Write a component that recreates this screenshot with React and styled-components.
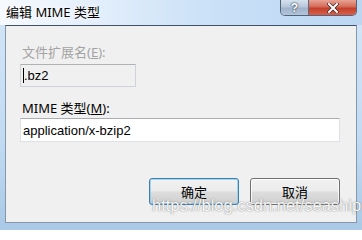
import React from 'react';
import styled, { createGlobalStyle } from 'styled-components';

const GlobalStyle = createGlobalStyle`
  html, body {
    margin: 0;
    padding: 0;
    width: 362px;
    height: 230px;
    overflow: hidden;
  }
  *, *::before, *::after {
    box-sizing: border-box;
  }
  body {
    font-family: 'Noto Sans', 'Noto Sans CJK SC', sans-serif;
    font-size: 12px;
    color: #000;
  }
`;

const Window = styled.div`
  position: relative;
  width: 362px;
  height: 230px;
  display: flex;
  flex-direction: column;
  background: linear-gradient(to bottom, #d4e6f8 0%, #c2dbf3 60%, #a9c9e6 100%);
`;

const TitleBar = styled.div`
  height: 25px;
  display: flex;
  align-items: flex-start;
  background: linear-gradient(to right, #f6fafe 0%, #e4effb 25%, #c9e0f7 60%, #bcd6f2 100%);
`;

const Title = styled.div`
  padding: 4px 0 0 6px;
  font-size: 13px;
  line-height: 17px;
  color: #000;
  text-shadow: 0 0 6px #fff, 0 0 3px #fff;
`;

const CaptionButtons = styled.div`
  margin-left: auto;
  margin-right: 5px;
  display: flex;
  border: 1px solid #52637a;
  border-top: none;
  border-radius: 0 0 5px 5px;
  overflow: hidden;
  height: 16px;
`;

const CaptionButton = styled.div`
  width: ${p => p.$w}px;
  height: 100%;
  display: flex;
  align-items: center;
  justify-content: center;
  background: ${p => p.$close
    ? 'linear-gradient(to bottom, #e8a394 0%, #d46a58 45%, #c4402c 55%, #d8604a 100%)'
    : 'linear-gradient(to bottom, #d5e1ee 0%, #b7c7da 45%, #a0b3ca 55%, #b3c5d9 100%)'};
  border-left: ${p => p.$close ? '1px solid #5d6b7c' : 'none'};
  color: #fff;
  font-family: 'Liberation Sans', sans-serif;
  font-weight: bold;
  font-size: 12px;
  text-shadow: 0 0 2px #2c3a4c, 0 0 1px #2c3a4c;
`;

const Panel = styled.div`
  flex: 1;
  margin: 0 5px 7px 5px;
  background: #f0f0f0;
  border: 1px solid #8497ab;
  border-top-color: #3f5269;
  display: flex;
  flex-direction: column;
  padding: 18px 16px 0 14px;
`;

const Label = styled.div`
  padding-left: 2px;
  margin-top: ${p => p.$mt || 0}px;
  line-height: 16px;
  font-size: 13px;
  color: ${p => p.$disabled ? '#a3a3a3' : '#000'};
  u { text-decoration: underline; }
`;

const TextBox = styled.div`
  width: ${p => p.$w}px;
  height: ${p => p.$h}px;
  margin-top: ${p => p.$mt}px;
  display: flex;
  align-items: center;
  padding-left: 2px;
  font-family: 'Liberation Sans', Arial, sans-serif;
  font-size: 13px;
  background: ${p => p.$disabled ? '#f0f0f0' : '#fff'};
  border: 1px solid ${p => p.$disabled ? '#cfd2d6' : '#dde2e8'};
  border-top-color: ${p => p.$disabled ? '#adb2b5' : '#abadb3'};
`;

const Caret = styled.span`
  display: inline-block;
  width: 1px;
  height: 15px;
  background: #000;
`;

const ButtonRow = styled.div`
  display: flex;
  justify-content: flex-end;
  gap: 11px;
  margin-top: 36px;
`;

const Button = styled.div`
  width: 90px;
  height: 27px;
  display: flex;
  align-items: center;
  justify-content: center;
  font-size: 13px;
  border-radius: 3px;
  border: 1px solid ${p => p.$default ? '#3c7fb1' : '#707070'};
  background: linear-gradient(to bottom, #f2f2f2 0%, #ebebeb 48%, #dddddd 52%, #cfcfcf 100%);
  box-shadow: inset 0 0 0 1px ${p => p.$default ? 'rgba(130,200,240,0.7)' : 'rgba(255,255,255,0.8)'};
`;

const Watermark = styled.div`
  position: absolute;
  left: 152px;
  top: 196px;
  font-family: 'Liberation Sans', Arial, sans-serif;
  font-size: 16.5px;
  color: rgba(255, 255, 255, 0.95);
  text-shadow: 0 0 1px rgba(100, 100, 100, 0.8), 0 0 2px rgba(150, 150, 150, 0.5);
  pointer-events: none;
`;

export default function App() {
  return (
    <Window>
      <GlobalStyle />
      <TitleBar>
        <Title>编辑 MIME 类型</Title>
        <CaptionButtons>
          <CaptionButton $w={27}>?</CaptionButton>
          <CaptionButton $w={48} $close>
            <svg width="12" height="10" viewBox="0 0 12 10">
              <path d="M2 1 L10 9 M10 1 L2 9" stroke="#3a2a2a" strokeWidth="3.4" strokeLinecap="square" />
              <path d="M2 1 L10 9 M10 1 L2 9" stroke="#fff" strokeWidth="2" strokeLinecap="square" />
            </svg>
          </CaptionButton>
        </CaptionButtons>
      </TitleBar>
      <Panel>
        <Label $disabled>文件扩展名(<u>E</u>):</Label>
        <TextBox $w={116} $h={23} $mt={4} $disabled>
          <Caret />.bz2
        </TextBox>
        <Label $mt={13}>MIME 类型(<u>M</u>):</Label>
        <TextBox $w={320} $h={24} $mt={2}>application/x-bzip2</TextBox>
        <ButtonRow>
          <Button $default>确定</Button>
          <Button>取消</Button>
        </ButtonRow>
      </Panel>
      <Watermark>https://blog.csdn.net/seaship</Watermark>
    </Window>
  );
}
